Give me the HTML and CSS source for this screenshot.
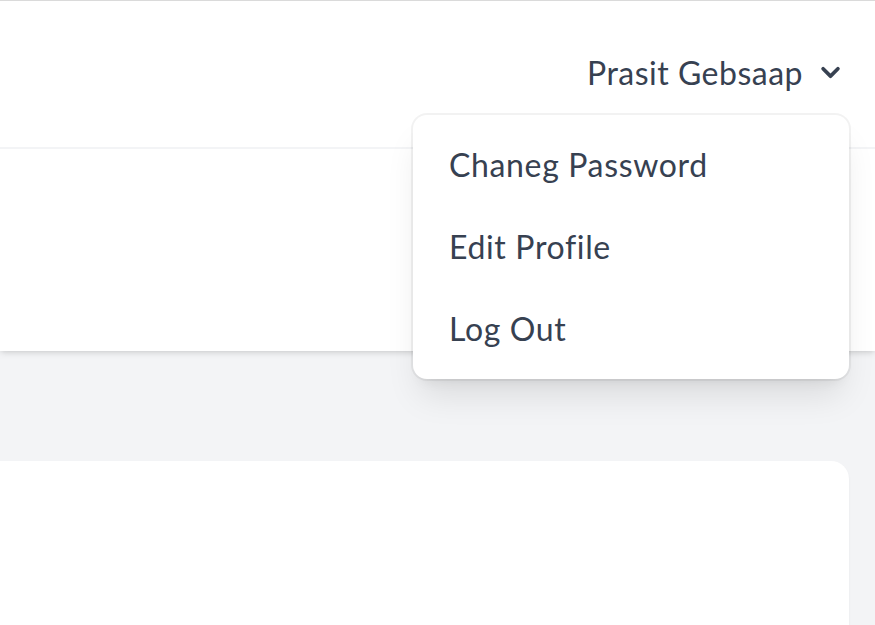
FILE: index.html
```html
<!DOCTYPE html>
<html lang="en">
<head>
<meta charset="utf-8">
<title>Dashboard</title>
<link rel="stylesheet" href="styles.css">
</head>
<body>
<div class="topline"></div>
<nav class="nav">
  <div class="nav-inner">
    <button class="trigger" type="button">
      <span class="trigger-name">Prasit Gebsaap</span>
      <svg class="chevron" viewBox="0 0 20 20" fill="currentColor" aria-hidden="true"><path fill-rule="evenodd" d="M5.293 7.293a1 1 0 011.414 0L10 10.586l3.293-3.293a1 1 0 111.414 1.414l-4 4a1 1 0 01-1.414 0l-4-4a1 1 0 010-1.414z" clip-rule="evenodd"/></svg>
    </button>
  </div>
  <div class="dropdown">
    <a class="dropdown-item" href="#">Chaneg Password</a>
    <a class="dropdown-item" href="#">Edit Profile</a>
    <a class="dropdown-item" href="#">Log Out</a>
  </div>
</nav>
<header class="page-header"></header>
<main class="main">
  <div class="card"></div>
</main>
</body>
</html>
```

FILE: styles.css
```css
* { box-sizing: border-box; }
html, body { margin: 0; padding: 0; }
html { overflow: hidden; }
body {
  background: #f3f4f6;
  font-family: "Lato", "Noto Sans", sans-serif;
  color: #374151;
  overflow: hidden;
  height: 625px;
}
.topline { height: 1px; background: #dadada; }
.nav {
  position: relative;
  background: #ffffff;
  border-bottom: 2px solid #f3f4f6;
  z-index: 2;
}
.nav-inner {
  height: 146px;
  display: flex;
  justify-content: flex-end;
  align-items: center;
  padding: 0 26px 4px 0;
}
.trigger {
  display: inline-flex;
  align-items: center;
  border: 0;
  background: transparent;
  padding: 0;
  font: inherit;
  color: #374151;
  font-size: 32px;
  line-height: 37px;
  letter-spacing: 0.5px;
  cursor: pointer;
}
.chevron {
  width: 37px;
  height: 37px;
  margin-left: 9px;
  color: #374151;
}
.dropdown {
  position: absolute;
  top: 114px;
  right: 26px;
  width: 436px;
  background: #ffffff;
  border-radius: 14px;
  padding: 9px 0;
  box-shadow: 0 0 0 2px rgba(0,0,0,0.05), 0 23px 34px -7px rgba(0,0,0,0.1), 0 9px 14px -9px rgba(0,0,0,0.1);
}
.dropdown-item {
  display: block;
  padding: 18px 36px;
  font-size: 32px;
  line-height: 46px;
  letter-spacing: 0.65px;
  color: #374151;
  text-decoration: none;
}
.page-header {
  height: 202px;
  background: #ffffff;
  box-shadow: 0 2px 7px 0 rgba(0,0,0,0.1), 0 2px 5px -2px rgba(0,0,0,0.1);
  position: relative;
  z-index: 1;
}
.main {
  height: 274px;
  overflow: hidden;
  padding: 110px 26px 0 0;
}
.card {
  margin-left: -40px;
  height: 300px;
  background: #ffffff;
  border-radius: 18px;
  box-shadow: 0 2px 3px 0 rgba(0,0,0,0.05);
}
```
